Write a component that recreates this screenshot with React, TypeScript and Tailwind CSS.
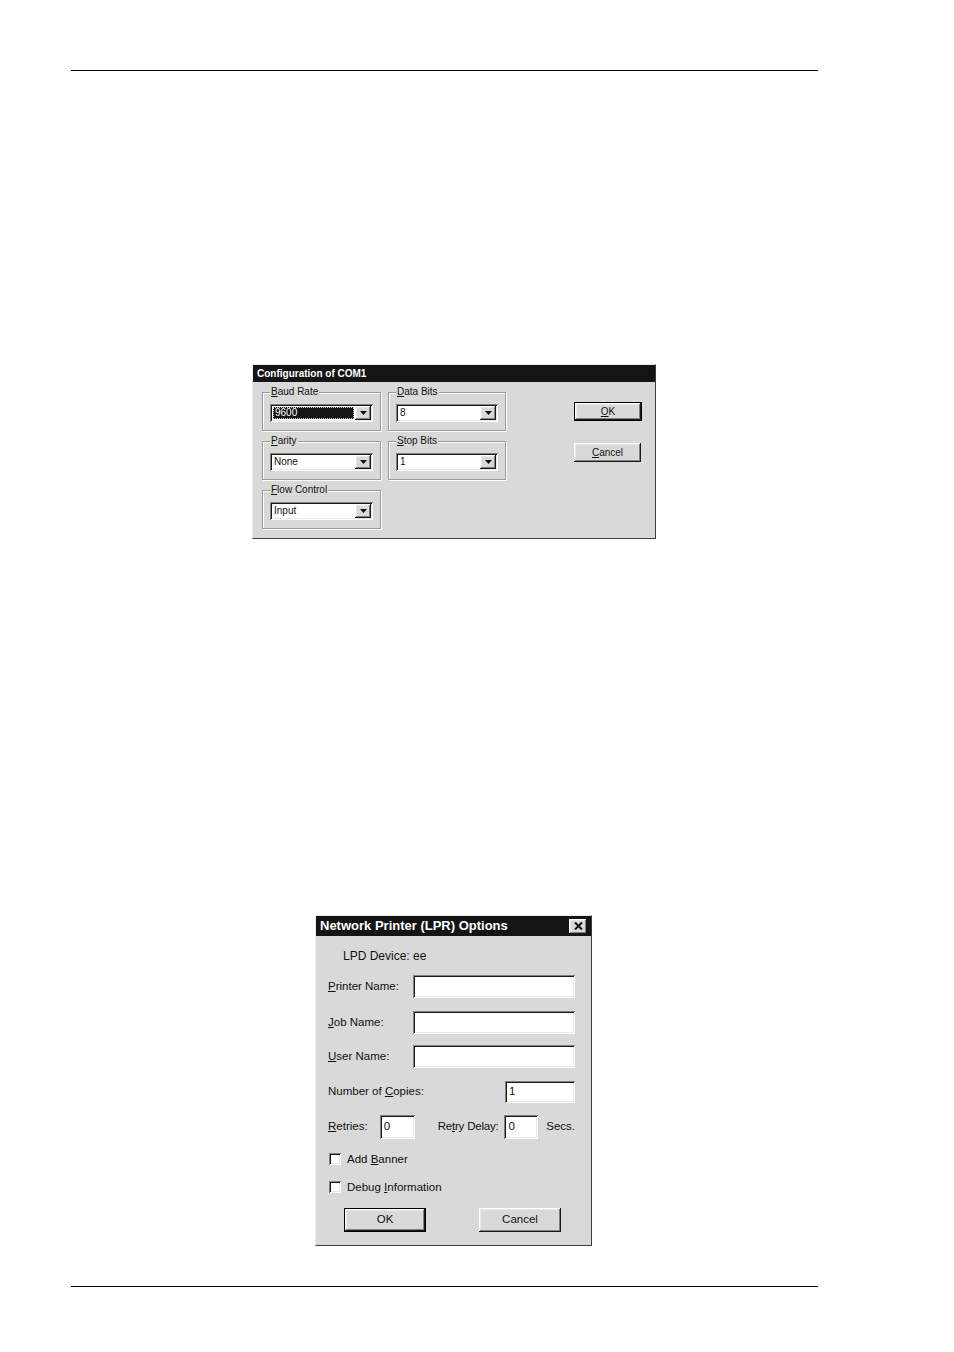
import React from 'react';

const bevelOut =
  'shadow-[inset_-1px_-1px_0_#1a1a1a,inset_1px_1px_0_#ffffff,inset_-2px_-2px_0_#808080,inset_2px_2px_0_#e8e8e8]';
const bevelIn =
  'shadow-[inset_1px_1px_0_#808080,inset_-1px_-1px_0_#ffffff,inset_2px_2px_0_#1a1a1a,inset_-2px_-2px_0_#e8e8e8]';

const Arrow = () => (
  <svg width="7" height="4" viewBox="0 0 7 4">
    <path d="M0 0h7L3.5 4z" fill="#111" />
  </svg>
);

// label with one underlined letter (the mnemonic)
const Mn = ({ pre = '', u, post = '' }: { pre?: string; u: string; post?: string }) => (
  <>
    {pre}
    <span className="underline underline-offset-[1px]">{u}</span>
    {post}
  </>
);

const Combo = ({ value, width, selected }: { value: string; width: string; selected?: boolean }) => (
  <div className={`ml-[7px] mt-[11px] h-[18px] bg-white ${bevelIn} p-[2px] flex ${width}`}>
    <div className="flex-1 flex items-center pl-[1px] pr-[1px]">
      {selected ? (
        <div className="w-full h-[12px] bg-[#141414] text-white border border-dotted border-[#cfcfcf] leading-[10px] pl-[1px]">
          {value}
        </div>
      ) : (
        <span className="pl-[1px] leading-[14px]">{value}</span>
      )}
    </div>
    <div className={`w-[16px] h-[14px] bg-[#d9d9d9] ${bevelOut} flex items-center justify-center`}>
      <Arrow />
    </div>
  </div>
);

const Group = ({ label, children, width }: { label: React.ReactNode; children: React.ReactNode; width: string }) => (
  <div className={`relative h-[39px] border border-[#9a9a9a] shadow-[1px_1px_0_#ffffff,inset_1px_1px_0_#ffffff] ${width}`}>
    <span className="absolute left-[7px] -top-[7px] bg-[#d9d9d9] px-[1px] leading-[12px]">{label}</span>
    {children}
  </div>
);

const ComDialog = () => (
  <div className="ml-[252px] mt-[293px] w-[404px] h-[175px] bg-[#d9d9d9] border border-t-[#ececec] border-l-[#ececec] border-r-[#3c3c3c] border-b-[#3c3c3c] flex flex-col text-[10px] text-[#111]">
    <div className="h-[17px] bg-[#141414] text-white font-bold leading-[17px] pl-[4px]">Configuration of COM1</div>
    <div className="flex">
      <div className="grid grid-cols-[119px_118px] gap-x-[7px] gap-y-[10px] ml-[9px] mt-[10px] content-start">
        <Group width="w-[119px]" label={<Mn u="B" post="aud Rate" />}>
          <Combo value="9600" width="w-[103px]" selected />
        </Group>
        <Group width="w-[118px]" label={<Mn u="D" post="ata Bits" />}>
          <Combo value="8" width="w-[102px]" />
        </Group>
        <Group width="w-[119px]" label={<Mn u="P" post="arity" />}>
          <Combo value="None" width="w-[103px]" />
        </Group>
        <Group width="w-[118px]" label={<Mn u="S" post="top Bits" />}>
          <Combo value="1" width="w-[102px]" />
        </Group>
        <Group width="w-[119px]" label={<Mn u="F" post="low Control" />}>
          <Combo value="Input" width="w-[103px]" />
        </Group>
      </div>
      <div className="ml-auto mr-[13px] mt-[20px] flex flex-col items-start">
        <button className="w-[68px] h-[19px] border border-black bg-[#d9d9d9] flex">
          <span className={`flex-1 ${bevelOut} flex items-center justify-center`}>
            <Mn u="O" post="K" />
          </span>
        </button>
        <button className={`mt-[22px] w-[67px] h-[19px] bg-[#d9d9d9] ${bevelOut} flex items-center justify-center`}>
          <Mn u="C" post="ancel" />
        </button>
      </div>
    </div>
  </div>
);

const Field = ({ value = '', width, height = 'h-[23px]' }: { value?: string; width: string; height?: string }) => (
  <div className={`bg-white ${bevelIn} ${width} ${height} flex items-center pl-[4px]`}>{value}</div>
);

const Check = ({ label }: { label: React.ReactNode }) => (
  <div className="flex items-center h-[14px]">
    <div className={`ml-[1px] w-[12px] h-[12px] bg-white ${bevelIn}`} />
    <span className="ml-[6px] leading-[14px]">{label}</span>
  </div>
);

const LprDialog = () => (
  <div className="ml-[315px] mt-[376px] w-[277px] h-[331px] bg-[#d9d9d9] border border-t-[#ececec] border-l-[#ececec] border-r-[#3c3c3c] border-b-[#3c3c3c] flex flex-col text-[11.5px] text-[#111]">
    <div className="h-[20px] bg-[#141414] flex items-center pl-[4px] pr-[4px]">
      <span className="text-white font-bold text-[13px] leading-[20px]">Network Printer (LPR) Options</span>
      <div className={`ml-auto w-[18px] h-[15px] bg-[#d9d9d9] ${bevelOut} flex items-center justify-center`}>
        <svg width="9" height="8" viewBox="0 0 9 8">
          <path d="M1 0.5L8 7.5M8 0.5L1 7.5" stroke="#111" strokeWidth="2" />
        </svg>
      </div>
    </div>
    <div className="flex flex-col pl-[12px] pr-[16px]">
      <div className="mt-[12px] h-[16px] pl-[15px] leading-[16px] text-[12px]">LPD Device: ee</div>

      <div className="mt-[11px] flex items-center">
        <span className="w-[85px]"><Mn u="P" post="rinter Name:" /></span>
        <Field width="w-[162px]" />
      </div>
      <div className="mt-[13px] flex items-center">
        <span className="w-[85px]"><Mn u="J" post="ob Name:" /></span>
        <Field width="w-[162px]" />
      </div>
      <div className="mt-[11px] flex items-center">
        <span className="w-[85px]"><Mn u="U" post="ser Name:" /></span>
        <Field width="w-[162px]" />
      </div>
      <div className="mt-[13px] flex items-center justify-between">
        <span><Mn pre="Number of " u="C" post="opies:" /></span>
        <Field value="1" width="w-[70px]" height="h-[22px]" />
      </div>
      <div className="mt-[12px] flex items-center">
        <span className="w-[52px]"><Mn u="R" post="etries:" /></span>
        <Field value="0" width="w-[35px]" height="h-[24px]" />
        <span className="ml-[23px] w-[67px] tracking-[-0.2px]"><Mn pre="Re" u="t" post="ry Delay:" /></span>
        <Field value="0" width="w-[34px]" height="h-[24px]" />
        <span className="ml-[8px]">Secs.</span>
      </div>

      <div className="mt-[13px]">
        <Check label={<Mn pre="Add " u="B" post="anner" />} />
      </div>
      <div className="mt-[14px]">
        <Check label={<Mn pre="Debug " u="I" post="nformation" />} />
      </div>

      <div className="mt-[14px] flex pl-[16px]">
        <button className="w-[82px] h-[24px] border border-black bg-[#d9d9d9] flex">
          <span className={`flex-1 ${bevelOut} flex items-center justify-center`}>OK</span>
        </button>
        <button className={`ml-[53px] w-[82px] h-[24px] bg-[#d9d9d9] ${bevelOut} flex items-center justify-center`}>
          Cancel
        </button>
      </div>
    </div>
  </div>
);

export default function App() {
  return (
    <div className="w-[954px] h-[1352px] bg-white flex flex-col font-['Liberation_Sans',Arial,sans-serif]">
      <div className="mt-[70px] ml-[71px] w-[747px] h-px bg-black" />
      <ComDialog />
      <LprDialog />
      <div className="mt-[40px] ml-[71px] w-[747px] h-px bg-black" />
    </div>
  );
}
